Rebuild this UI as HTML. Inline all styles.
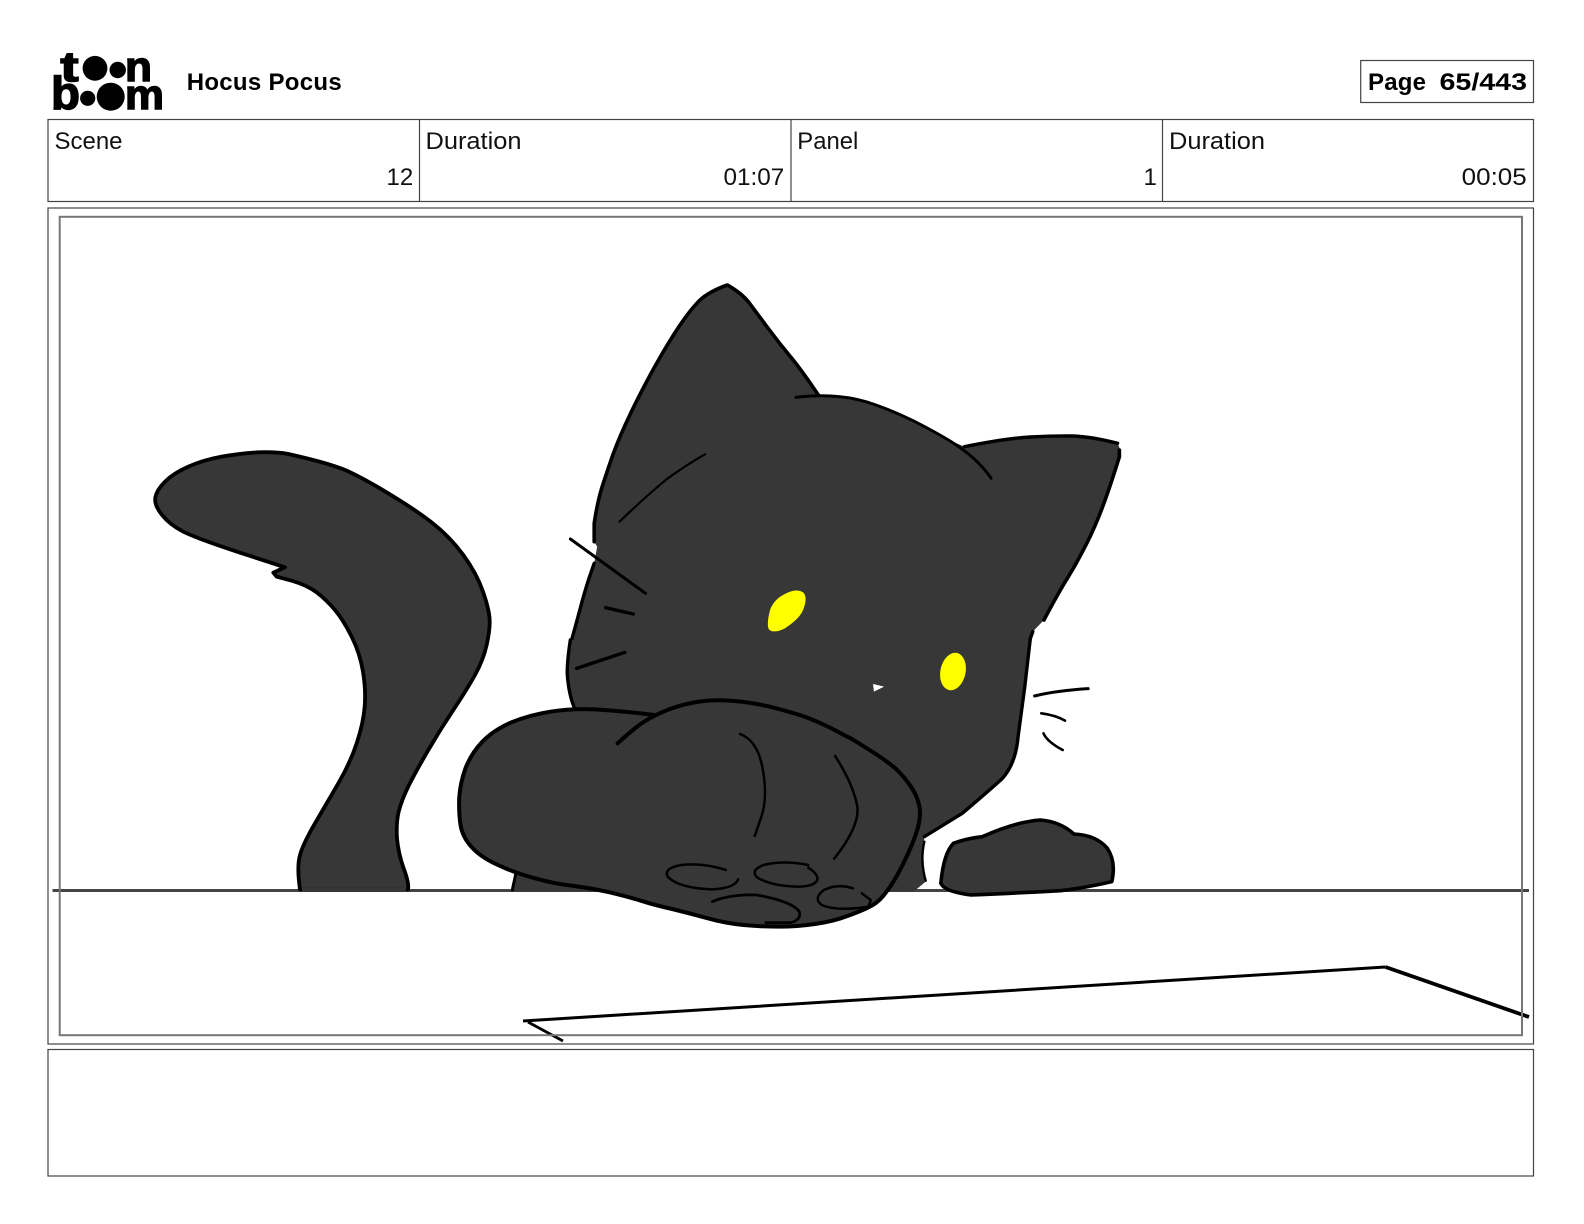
<!DOCTYPE html>
<html lang="en">
<head>
<meta charset="utf-8">
<title>Hocus Pocus</title>
<style>
html,body{margin:0;padding:0;background:#fff;width:1584px;height:1224px;overflow:hidden}
svg{display:block}
text{font-family:"Liberation Sans",sans-serif;fill:#111}
.b{font-weight:700;fill:#000}
.s{fill:none;stroke:#000;stroke-linecap:round;stroke-linejoin:round;vector-effect:non-scaling-stroke}
.f{fill:#373737}
.fr{fill:none;stroke:#444;stroke-width:1.2}
</style>
</head>
<body>
<svg width="1584" height="1224" viewBox="0 0 1584 1224" xmlns="http://www.w3.org/2000/svg">
<rect width="1584" height="1224" fill="#fff"/>

<!-- logo -->
<g class="logo">
<text class="b" x="60.5" y="81" font-size="42" textLength="18" lengthAdjust="spacingAndGlyphs" stroke="#000" stroke-width="1.6">t</text>
<text class="b" x="125" y="81" font-size="42" textLength="27" lengthAdjust="spacingAndGlyphs" stroke="#000" stroke-width="1.4">n</text>
<text class="b" x="51" y="109" font-size="46" textLength="29" lengthAdjust="spacingAndGlyphs" stroke="#000" stroke-width="1.4">b</text>
<text class="b" x="125" y="109" font-size="42" textLength="39" lengthAdjust="spacingAndGlyphs" stroke="#000" stroke-width="1.4">m</text>
<circle cx="95" cy="68.3" r="12.4" fill="#000"/>
<circle cx="117.7" cy="70" r="8.2" fill="#000"/>
<circle cx="87.7" cy="98.3" r="7.6" fill="#000"/>
<circle cx="110.7" cy="96.7" r="14" fill="#000"/>
</g>

<text class="b" x="186.7" y="90" font-size="24" textLength="155">Hocus Pocus</text>

<rect class="fr" x="1360.7" y="60.5" width="172.8" height="42"/>
<text class="b" x="1368" y="90" font-size="24" textLength="58">Page</text>
<text class="b" x="1439.5" y="90" font-size="24" textLength="87.5" lengthAdjust="spacingAndGlyphs">65/443</text>

<!-- info table -->
<rect class="fr" x="48" y="119.5" width="1485.5" height="82"/>
<line class="fr" x1="419.5" y1="119.5" x2="419.5" y2="201.5"/>
<line class="fr" x1="791" y1="119.5" x2="791" y2="201.5"/>
<line class="fr" x1="1162.5" y1="119.5" x2="1162.5" y2="201.5"/>
<text x="54.5" y="149" font-size="24" textLength="68" lengthAdjust="spacingAndGlyphs">Scene</text>
<text x="386.5" y="185" font-size="24">12</text>
<text x="425.5" y="149" font-size="24" textLength="96" lengthAdjust="spacingAndGlyphs">Duration</text>
<text x="723.5" y="185" font-size="24" textLength="60.7" lengthAdjust="spacingAndGlyphs">01:07</text>
<text x="797.3" y="149" font-size="24" textLength="61" lengthAdjust="spacingAndGlyphs">Panel</text>
<text x="1143.5" y="185" font-size="24">1</text>
<text x="1169" y="149" font-size="24" textLength="96" lengthAdjust="spacingAndGlyphs">Duration</text>
<text x="1461.7" y="185" font-size="24" textLength="65" lengthAdjust="spacingAndGlyphs">00:05</text>

<!-- panel frame -->
<rect class="fr" x="48" y="208" width="1485.5" height="836"/>

<!-- horizon -->
<line x1="52.5" y1="890.5" x2="1529" y2="890.5" stroke="#444" stroke-width="3"/>

<!-- tail -->
<g transform="translate(130 430) scale(.33333)">
<path class="f s" stroke-width="3.8" d="M475 72 Q600 100 650 122 Q700 145 775 190 Q850 235 905 277 Q960 320 1000 375 Q1040 430 1059 485 Q1078 540 1079 570 Q1080 600 1070 645 Q1060 690 1035 735 Q1010 780 970 840 Q930 900 895 960 Q860 1020 837 1065 Q815 1110 806 1145 Q798 1180 801 1225 Q805 1270 821 1315 Q838 1360 834 1378 L510 1378 Q500 1310 510 1275 Q520 1240 555 1180 Q590 1120 625 1060 Q660 1000 680 940 Q700 880 704 830 Q708 780 699 725 Q690 670 665 620 Q640 570 615 540 Q590 510 560 487 Q530 465 485 452 L440 440 L430 428 L465 412 L330 368 Q200 325 160 305 Q120 285 96 255 Q72 225 76 202 Q80 180 105 155 Q130 130 175 110 Q220 90 275 80 Q330 70 385 67 Q440 65 475 72 Z"/>
<rect x="516" y="1372" width="312" height="14" fill="#373737"/>
</g>

<!-- head -->
<g transform="translate(560 270) scale(.3717 .33333)">
<path class="f" d="M450 45 Q490 70 510 100 Q530 130 560 175 Q590 220 620 260 Q650 300 695 375 Q800 385 850 405 Q900 425 950 452 Q1000 480 1045 510 L1088 530 Q1200 505 1265 501 Q1330 497 1380 498 Q1430 500 1500 520 Q1510 540 1505 560 Q1480 650 1460 710 Q1440 770 1415 825 Q1390 880 1365 925 Q1340 970 1302 1050 L1272 1085 L1258 1200 L22 1200 L30 1115 Q40 1075 52 1025 Q65 970 78 925 L92 880 L100 830 L92 815 L92 760 Q100 700 112 655 Q125 610 142 555 Q160 500 190 430 Q220 360 255 290 Q290 220 320 170 Q350 120 375 92 Q400 65 450 45 Z"/>
<path class="s" stroke-width="3.6" d="M92 815 L92 760 Q100 700 112 655 Q125 610 142 555 Q160 500 190 430 Q220 360 255 290 Q290 220 320 170 Q350 120 375 92 Q400 65 450 45 Q490 70 510 100 Q530 130 560 175 Q590 220 620 260 Q650 300 695 375"/>
<path class="s" stroke-width="3" d="M635 382 Q700 374 750 380 Q800 385 850 405 Q900 425 950 452 Q1000 480 1045 510 Q1120 560 1160 625"/>
<path class="s" stroke-width="3.4" d="M1088 530 Q1200 505 1265 501 Q1330 497 1380 498 Q1430 500 1500 520"/>
<path class="s" stroke-width="3.6" d="M1505 540 L1505 560 Q1480 650 1460 710 Q1440 770 1415 825 Q1390 880 1365 925 Q1340 970 1302 1050"/>
<path class="s" stroke-width="3.4" d="M1272 1085 L1264 1110"/>
<path class="s" stroke-width="3.4" d="M92 880 L78 925 Q65 970 52 1025 Q40 1075 30 1115"/>
<path class="s" stroke-width="2.2" d="M160 755 Q240 670 290 625 Q340 585 390 553"/>
<path class="s" stroke-width="3" d="M28 807 L230 970"/>
<path class="s" stroke-width="3.4" d="M123 1013 L197 1032"/>
<path fill="#ffff00" d="M600 975 Q635 952 655 968 Q668 985 652 1025 Q640 1050 605 1075 Q575 1092 562 1078 Q555 1065 565 1020 Q575 990 600 975 Z"/>
</g>

<!-- lower -->
<g transform="translate(440 640) scale(.4464 .33333)">
<path class="f" d="M292 0 L1322 0 L1310 140 L1295 290 Q1290 370 1260 415 Q1240 440 1170 520 L1085 590 L1080 660 L1088 725 L1070 745 L1060 755 L160 755 L170 700 L300 200 L285 100 Z"/>
<path class="s" stroke-width="3.4" d="M1322 0 L1310 140 L1295 290 Q1290 370 1260 415 Q1240 440 1170 520 L1085 590"/>
<path class="s" stroke-width="2.4" d="M1085 605 Q1075 660 1088 722"/>
<path class="s" stroke-width="3.4" d="M292 0 Q285 60 285 100 Q288 160 300 200"/>
<path class="s" stroke-width="3" d="M170 700 L162 750"/>
<path class="s" stroke-width="3.4" d="M306 85 L414 37"/>

<path class="f s" stroke-width="4" d="M480 225 Q400 212 347 208 Q295 205 247 215 Q200 225 160 247 Q120 270 95 305 Q70 340 57 385 Q45 430 43 475 Q42 520 46 555 Q50 590 70 620 Q90 650 125 672 Q160 695 205 712 Q250 730 295 737 Q340 745 380 757 Q420 770 450 782 Q480 795 520 807 Q560 820 600 835 Q640 850 680 855 Q720 860 760 860 Q800 860 840 852 Q880 845 915 827 Q950 810 967 797 Q985 785 1002 752 Q1020 720 1040 665 Q1060 610 1069 570 Q1078 530 1074 500 Q1070 470 1055 440 Q1040 410 1020 385 Q1000 360 920 295 L905 285 Q850 245 810 227 Q770 210 735 199 Q700 188 660 183 Q620 178 585 184 Q550 190 515 207 Q480 225 455 247 Q430 270 398 310"/>
<path class="s" stroke-width="2.5" d="M672 282 Q710 300 722 380 Q735 470 720 530 L705 588"/>
<path class="s" stroke-width="2.5" d="M885 348 Q925 430 935 500 Q940 560 883 656"/>
<path class="s" stroke-width="2.5" d="M640 690 Q590 668 540 675 Q500 685 510 710 Q535 745 610 748 Q660 745 668 718"/>
<path class="s" stroke-width="2.5" d="M825 675 Q770 660 725 675 Q695 690 710 712 Q745 740 810 740 Q850 735 845 710 Q840 695 825 683"/>
<path class="s" stroke-width="2.8" d="M610 785 Q650 762 710 765 Q790 785 805 815 Q810 840 785 848 L730 848"/>
<path class="s" stroke-width="2.5" d="M925 745 Q890 730 860 750 Q835 775 855 795 Q890 815 960 800 L965 780 L945 760"/>

<path class="f s" stroke-width="3.6" d="M1215 590 Q1290 545 1345 540 Q1390 545 1420 582 Q1470 585 1495 625 Q1515 665 1505 725 Q1440 745 1390 752 Q1280 760 1190 765 Q1130 755 1122 730 Q1128 640 1150 610 Q1180 595 1215 590 Z"/>

<path class="s" stroke-width="3" d="M1332 168 Q1380 152 1452 146"/>
<path class="s" stroke-width="2.6" d="M1347 220 Q1380 226 1400 242"/>
<path class="s" stroke-width="2.6" d="M1352 280 Q1360 305 1395 330"/>

<path fill="#fff" d="M970 132 L995 140 L972 155 Z"/>
</g>
<ellipse cx="953" cy="671.5" rx="12.6" ry="19" transform="rotate(12 953 671.5)" fill="#ffff00"/>

<!-- desk lines -->
<path fill="none" stroke="#000" stroke-width="3" d="M523 1021 L1385.5 967"/>
<path fill="none" stroke="#000" stroke-width="3.8" d="M1385.5 967 L1529 1017"/>
<path fill="none" stroke="#000" stroke-width="2.8" d="M528 1022 L563 1041"/>

<!-- inner frame -->
<rect x="59.7" y="216.8" width="1462.3" height="818.4" fill="none" stroke="#777" stroke-width="2"/>

<!-- notes -->
<rect class="fr" x="48" y="1049.5" width="1485.5" height="126.5"/>
</svg>
</body>
</html>
